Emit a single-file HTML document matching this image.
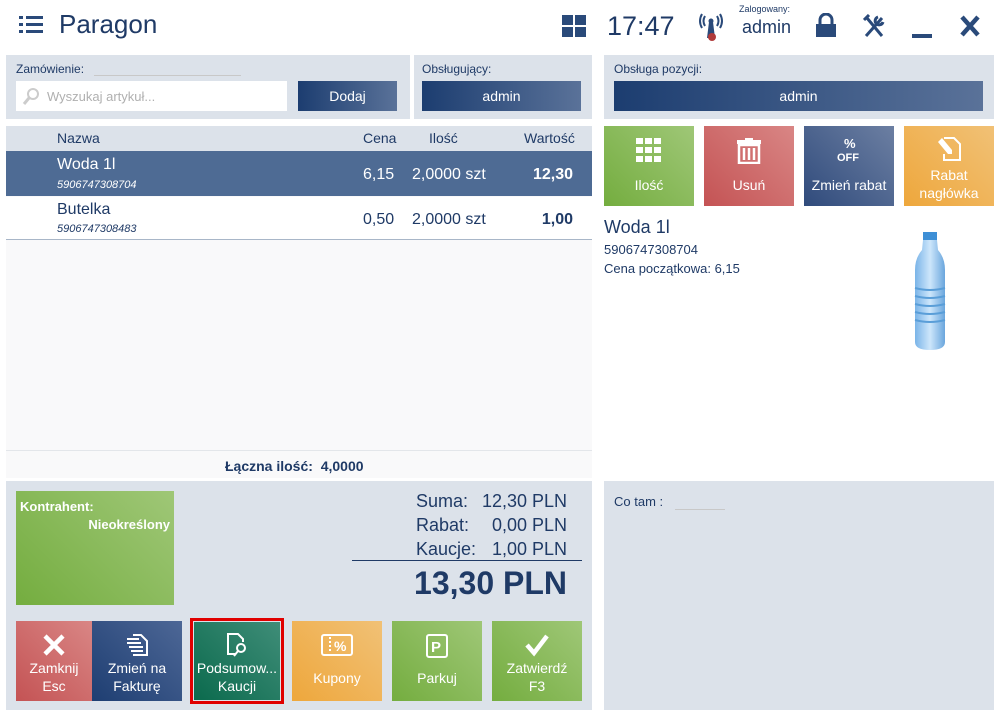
<!DOCTYPE html>
<html><head><meta charset="utf-8"><style>
*{box-sizing:border-box;margin:0;padding:0}
body{width:1000px;height:720px;background:#fff;font-family:"Liberation Sans","DejaVu Sans",sans-serif;color:#1f3a66;position:relative;overflow:hidden}
.a{position:absolute}
.panel{background:#dce2ea}
.btnb{background:linear-gradient(90deg,#1c3d70,#5a7299);color:#fff;font-size:14px;display:flex;align-items:center;justify-content:center}
.tile{position:absolute;color:#fff;font-size:14px;text-align:center;display:flex;flex-direction:column;align-items:center;justify-content:flex-end;padding-bottom:6px;line-height:18px}
.tile svg{position:absolute;top:12px;left:50%;transform:translateX(-50%)}
.g{background:linear-gradient(45deg,#74ad3f,#9fc777)}
.r{background:linear-gradient(45deg,#c45354,#d98685)}
.b{background:linear-gradient(45deg,#304b7c,#6c7fa2)}
.o{background:linear-gradient(45deg,#eea73c,#f1c176)}
.t{background:linear-gradient(45deg,#0b6a4d,#3f8d78)}
.db{background:linear-gradient(45deg,#1e3e72,#4d6796)}
.lbl{font-size:12px;color:#1f3a66}
</style></head><body>
<svg class="a" style="left:19px;top:15px" width="24" height="20" viewBox="0 0 24 20"><g fill="#2a4a7a"><rect x="0" y="1" width="4" height="3"/><rect x="7" y="1" width="17" height="3"/><rect x="0" y="8" width="4" height="3"/><rect x="7" y="8" width="17" height="3"/><rect x="0" y="15" width="4" height="3"/><rect x="7" y="15" width="17" height="3"/></g></svg>
<div class="a" style="left:59px;top:9px;font-size:26px;color:#1f3a66">Paragon</div>
<svg class="a" style="left:562px;top:15px" width="24" height="22"><g fill="#2a4a7a"><rect x="0" y="0" width="11" height="10"/><rect x="13" y="0" width="11" height="10"/><rect x="0" y="12" width="11" height="10"/><rect x="13" y="12" width="11" height="10"/></g></svg>
<div class="a" style="left:607px;top:11px;font-size:27px;color:#1f3a66">17:47</div>
<svg class="a" style="left:697px;top:12px" width="28" height="30" viewBox="0 0 28 30"><g fill="none" stroke="#2a4a7a" stroke-width="2"><path d="M8 4 Q5 9 8 14"/><path d="M20 4 Q23 9 20 14"/><path d="M5 2 Q1 9 5 16"/><path d="M23 2 Q27 9 23 16"/></g><circle cx="14" cy="9" r="2.5" fill="#2a4a7a"/><path d="M12 10 L10 26 L18 26 L16 10Z" fill="#2a4a7a"/><circle cx="15" cy="25" r="4" fill="#b03a3a"/></svg>
<div class="a" style="left:739px;top:4px;font-size:9px;color:#1f3a66">Zalogowany:</div>
<div class="a" style="left:742px;top:17px;font-size:18px;color:#1f3a66">admin</div>
<svg class="a" style="left:815px;top:13px" width="22" height="24"><path d="M5 11 V7 a6 6 0 0 1 12 0 V11" fill="none" stroke="#2a4a7a" stroke-width="3"/><rect x="1" y="11" width="20" height="13" fill="#2a4a7a"/></svg>
<svg class="a" style="left:863px;top:14px" width="22" height="24" viewBox="0 0 22 24"><g stroke="#2a4a7a" stroke-width="3" fill="none"><path d="M3 22 L19 4"/><path d="M4 4 L19 22"/><path d="M1 6 L6 1"/><path d="M15 3 a4 4 0 1 0 5 5"/></g></svg>
<div class="a" style="left:912px;top:34px;width:20px;height:4px;background:#2a4a7a"></div>
<svg class="a" style="left:960px;top:15px" width="20" height="22"><path d="M2 2 L18 20 M18 2 L2 20" stroke="#2a4a7a" stroke-width="4.5"/></svg>

<div class="a panel" style="left:6px;top:55px;width:404px;height:64px"></div>
<div class="a lbl" style="left:16px;top:62px">Zamówienie:</div>
<div class="a" style="left:94px;top:75px;width:147px;height:1px;background:#c8c8c8"></div>
<div class="a" style="left:16px;top:81px;width:271px;height:30px;background:#fff"></div>
<svg class="a" style="left:22px;top:87px" width="18" height="18"><circle cx="11" cy="7" r="5" fill="none" stroke="#ccc" stroke-width="2"/><path d="M7 11 L2 17" stroke="#ccc" stroke-width="3"/></svg>
<div class="a" style="left:47px;top:89px;font-size:13px;color:#b0b0b0">Wyszukaj artykuł...</div>
<div class="a btnb" style="left:298px;top:81px;width:99px;height:30px">Dodaj</div>
<div class="a panel" style="left:414px;top:55px;width:178px;height:64px"></div>
<div class="a lbl" style="left:422px;top:62px">Obsługujący:</div>
<div class="a btnb" style="left:422px;top:81px;width:159px;height:30px">admin</div>
<div class="a panel" style="left:604px;top:55px;width:390px;height:64px"></div>
<div class="a lbl" style="left:614px;top:62px">Obsługa pozycji:</div>
<div class="a btnb" style="left:614px;top:81px;width:369px;height:30px">admin</div>

<div class="a" style="left:6px;top:126px;width:586px;height:352px;background:#f9f9fa"></div>
<div class="a" style="left:6px;top:126px;width:586px;height:25px;background:#dce2ea;font-size:14px">
<span class="a" style="left:51px;top:4px">Nazwa</span><span class="a" style="left:357px;top:4px">Cena</span><span class="a" style="left:423px;top:4px">Ilość</span><span class="a" style="left:518px;top:4px">Wartość</span></div>
<div class="a" style="left:6px;top:151px;width:586px;height:45px;background:#4e6b94;color:#fff">
<span class="a" style="left:51px;top:5px;font-size:16px">Woda 1l</span><span class="a" style="left:51px;top:28px;font-size:11px;font-style:italic">5906747308704</span>
<span class="a" style="left:357px;top:15px;font-size:16px">6,15</span><span class="a" style="left:406px;top:15px;font-size:16px">2,0000 szt</span><span class="a" style="right:19px;top:15px;font-size:16px;font-weight:bold">12,30</span></div>
<div class="a" style="left:6px;top:197px;width:586px;height:43px;background:#fff;border-bottom:1px solid #a8b6c8">
<span class="a" style="left:51px;top:4px;font-size:16px">Butelka</span><span class="a" style="left:51px;top:26px;font-size:11px;font-style:italic">5906747308483</span>
<span class="a" style="left:357px;top:14px;font-size:16px">0,50</span><span class="a" style="left:406px;top:14px;font-size:16px">2,0000 szt</span><span class="a" style="right:19px;top:14px;font-size:16px;font-weight:bold">1,00</span></div>
<div class="a" style="left:6px;top:450px;width:586px;height:1px;background:#e3e6ea"></div>
<div class="a" style="left:225px;top:458px;font-size:14px;font-weight:bold;color:#1f3a66">Łączna ilość:&nbsp; 4,0000</div>

<div class="a panel" style="left:6px;top:481px;width:586px;height:229px"></div>
<div class="a g" style="left:16px;top:491px;width:158px;height:114px;color:#fff;font-size:13px;font-weight:bold">
<span class="a" style="left:4px;top:8px">Kontrahent:</span><span class="a" style="right:4px;top:26px">Nieokreślony</span></div>
<div class="a" style="left:416px;top:489px;font-size:18px;color:#1f3a66;line-height:24px">Suma:<br>Rabat:<br>Kaucje:</div>
<div class="a" style="right:433px;top:489px;font-size:18px;color:#1f3a66;line-height:24px;text-align:right">12,30 PLN<br>0,00 PLN<br>1,00 PLN</div>
<div class="a" style="left:352px;top:560px;width:230px;height:1px;background:#1f3a66"></div>
<div class="a" style="right:433px;top:565px;font-size:32px;font-weight:bold;color:#1f3a66">13,30 PLN</div>

<div class="tile r" style="left:16px;top:621px;width:76px;height:80px">Zamknij<br>Esc<svg width="24" height="24" style="top:12px"><path d="M3 3 L21 21 M21 3 L3 21" stroke="#fff" stroke-width="4.5"/></svg></div>
<div class="tile db" style="left:92px;top:621px;width:90px;height:80px">Zmień na<br>Fakturę<svg width="24" height="24" style="top:12px"><g stroke="#fff" stroke-width="2" fill="none"><path d="M8 2 H16 L22 8 V22 H8"/><path d="M2 6 H14 M2 10 H16 M4 14 H18 M6 18 H18"/></g></svg></div>
<div class="a" style="left:190px;top:618px;width:94px;height:86px;border:3px solid #e00000"></div>
<div class="tile t" style="left:194px;top:622px;width:86px;height:78px;padding-bottom:5px">Podsumow...<br>Kaucji<svg width="24" height="26" style="top:10px"><g stroke="#fff" stroke-width="2" fill="none"><path d="M10 22 H3 V2 H13 L18 7 V10"/><circle cx="16" cy="16" r="4"/><path d="M13 19 L9 24"/></g></svg></div>
<div class="tile o" style="left:292px;top:621px;width:90px;height:80px;padding-bottom:14px">Kupony<svg width="32" height="24" style="top:12px"><rect x="1" y="2" width="30" height="20" rx="2" fill="none" stroke="#fff" stroke-width="2"/><path d="M9 4 V20" stroke="#fff" stroke-width="2" stroke-dasharray="2 2"/><text x="13" y="18" fill="#fff" font-size="14" font-weight="bold" font-family="Liberation Sans">%</text></svg></div>
<div class="tile g" style="left:392px;top:621px;width:90px;height:80px;padding-bottom:14px">Parkuj<svg width="22" height="24" style="top:13px"><rect x="1" y="1" width="20" height="22" rx="2" fill="none" stroke="#fff" stroke-width="2"/><text x="5" y="18" fill="#fff" font-size="15" font-weight="bold" font-family="Liberation Sans">P</text></svg></div>
<div class="tile g" style="left:492px;top:621px;width:90px;height:80px">Zatwierdź<br>F3<svg width="26" height="24" style="top:12px"><path d="M3 12 L10 20 L23 3" fill="none" stroke="#fff" stroke-width="4.5"/></svg></div>

<div class="tile g" style="left:604px;top:126px;width:90px;height:80px;padding-bottom:12px">Ilość<svg width="26" height="24" style="top:12px"><g fill="#fff"><rect x="0" y="0" width="7" height="6"/><rect x="9" y="0" width="7" height="6"/><rect x="18" y="0" width="7" height="6"/><rect x="0" y="9" width="7" height="6"/><rect x="9" y="9" width="7" height="6"/><rect x="18" y="9" width="7" height="6"/><rect x="0" y="18" width="7" height="6"/><rect x="9" y="18" width="7" height="6"/><rect x="18" y="18" width="7" height="6"/></g></svg></div>
<div class="tile r" style="left:704px;top:126px;width:90px;height:80px;padding-bottom:12px">Usuń<svg width="24" height="26" style="top:12px"><rect x="0" y="2" width="24" height="4" fill="#fff"/><rect x="8" y="0" width="8" height="3" fill="#fff"/><path d="M2 7 H22 V25 H2Z M7 10 V22 M12 10 V22 M17 10 V22" fill="none" stroke="#fff" stroke-width="2.5"/></svg></div>
<div class="tile b" style="left:804px;top:126px;width:90px;height:80px;padding-bottom:12px">Zmień rabat<svg width="30" height="28" style="top:10px"><text x="10" y="12" fill="#fff" font-size="13" font-weight="bold" font-family="Liberation Sans">%</text><text x="3" y="25" fill="#fff" font-size="11" font-weight="bold" font-family="Liberation Sans">OFF</text></svg></div>
<div class="tile o" style="left:904px;top:126px;width:90px;height:80px;padding-bottom:4px">Rabat<br>nagłówka<svg width="26" height="26" style="top:10px"><path d="M8 2 H18 L24 8 V24 H8 V18" fill="none" stroke="#fff" stroke-width="2"/><path d="M2 6 L6 2 L16 14 L16 18 L12 18Z" fill="#fff"/></svg></div>

<div class="a" style="left:604px;top:217px;font-size:18px;color:#1f3a66">Woda 1l</div>
<div class="a" style="left:604px;top:242px;font-size:13px;color:#1f3a66">5906747308704</div>
<div class="a" style="left:604px;top:261px;font-size:13px;color:#1f3a66">Cena początkowa: 6,15</div>
<svg class="a" style="left:910px;top:232px" width="40" height="122" viewBox="0 0 40 122"><defs><linearGradient id="w" x1="0" x2="1"><stop offset="0" stop-color="#7ab4e8"/><stop offset=".5" stop-color="#cde6fb"/><stop offset="1" stop-color="#6aa6dd"/></linearGradient></defs><rect x="13" y="0" width="14" height="8" fill="#3e8fd6"/><path d="M13 8 H27 L28 18 Q35 26 35 38 V110 Q35 118 20 118 Q5 118 5 110 V38 Q5 26 12 18Z" fill="url(#w)"/><g stroke="#5a9ed8" stroke-width="2" fill="none"><path d="M5 56 Q20 60 35 56"/><path d="M5 64 Q20 68 35 64"/><path d="M5 72 Q20 76 35 72"/><path d="M5 80 Q20 84 35 80"/><path d="M5 88 Q20 92 35 88"/></g></svg>

<div class="a panel" style="left:604px;top:481px;width:390px;height:229px"></div>
<div class="a" style="left:614px;top:494px;font-size:13px;color:#1f3a66">Co tam :</div>
<div class="a" style="left:675px;top:509px;width:50px;height:1px;background:#c8c8c8"></div>
</body></html>
